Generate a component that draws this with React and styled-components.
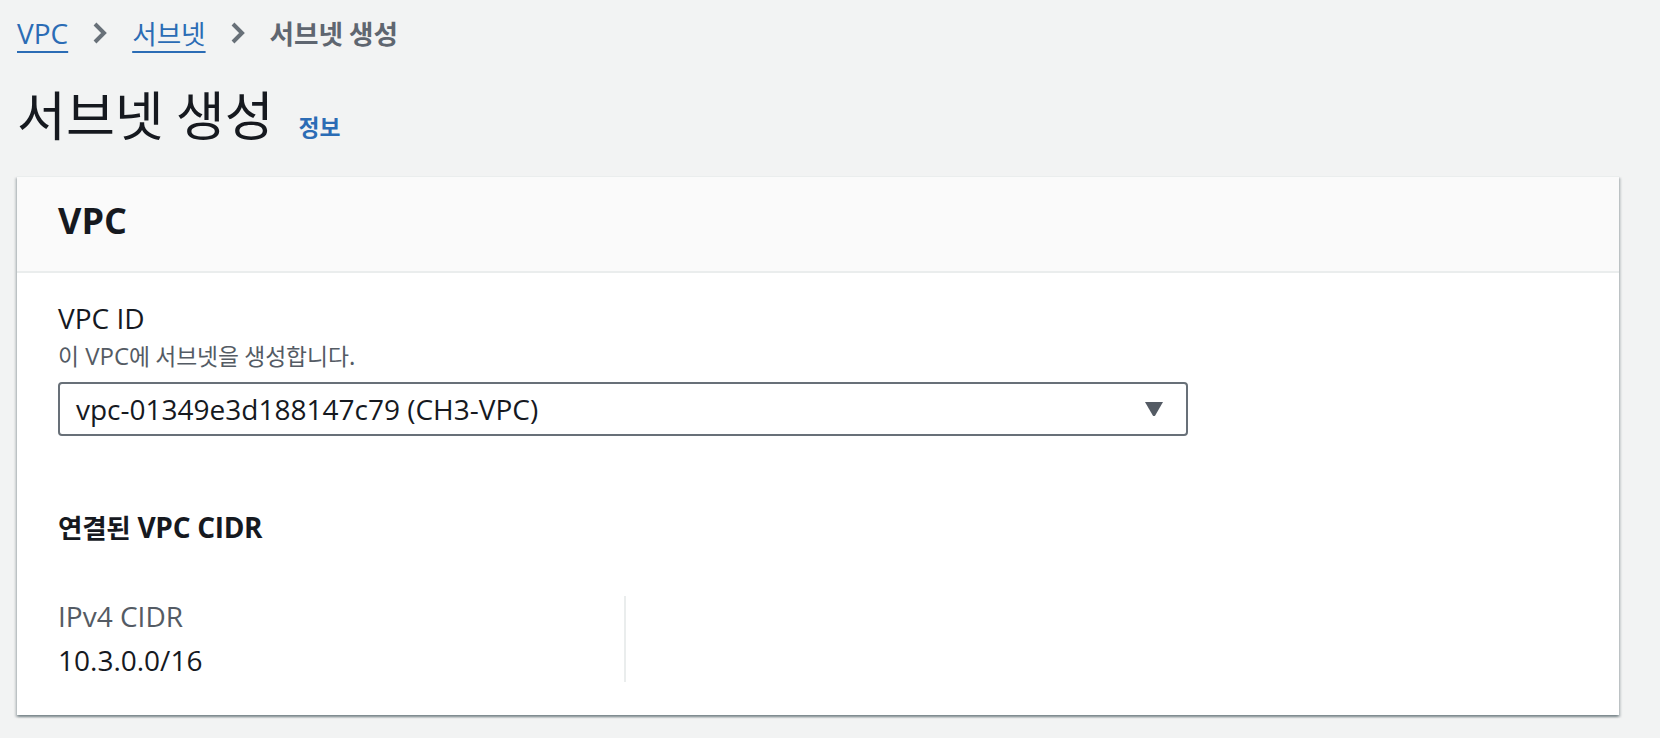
import styled, { createGlobalStyle } from 'styled-components';

const GlobalStyle = createGlobalStyle`
  body {
    margin: 0;
    background: #f2f3f3;
    color: #16191f;
    font-family: "Open Sans", "Noto Sans CJK KR", sans-serif;
  }
`;

// hangul runs: a touch smaller than the latin face, like the original system font
const Ko = styled.span`
  font-family: "Noto Sans CJK KR", sans-serif;
  font-size: 0.95em;
`;

const Page = styled.div`
  padding: 13px 41px 22px 17px;
`;

const Breadcrumbs = styled.nav`
  display: flex;
  align-items: center;
  gap: 24px;
  height: 40px;
  font-size: 28px;
  line-height: 40px;
`;

const Crumb = styled.a`
  color: #2b6cb5;
  text-decoration: underline;
  text-decoration-thickness: 2px;
  text-underline-offset: 7px;
  cursor: pointer;
`;

const Current = styled.span`
  color: #5f6670;
  font-weight: 700;
`;

const Chevron = () => (
  <svg width="16" height="24" viewBox="0 0 16 24">
    <polyline points="3,3 12,12 3,21" fill="none" stroke="#687078" strokeWidth="4" />
  </svg>
);

const TitleRow = styled.div`
  display: flex;
  align-items: baseline;
  gap: 25px;
  margin-top: 32px;
`;

const Title = styled.h1`
  margin: 0;
  font-size: 56px;
  font-weight: 400;
  line-height: 56px;
`;

const InfoLink = styled.a`
  color: #2b6cb5;
  font-size: 24px;
  font-weight: 700;
  cursor: pointer;
`;

const Card = styled.section`
  margin-top: 33px;
  background: #fff;
  border-top: 1px solid #eaeded;
  box-shadow: 0 2px 2px 0 rgba(0, 28, 36, 0.3), 2px 2px 2px 0 rgba(0, 28, 36, 0.15),
    -2px 2px 2px 0 rgba(0, 28, 36, 0.15);
`;

const CardHeader = styled.div`
  background: #fafafa;
  border-bottom: 2px solid #eaeded;
  padding: 22px 41px 28px;
`;

const CardTitle = styled.h2`
  margin: 0;
  font-size: 36px;
  font-weight: 700;
  line-height: 44px;
`;

const CardBody = styled.div`
  padding: 25px 41px 33px;
`;

const Label = styled.div`
  font-size: 28px;
  line-height: 40px;
  color: ${(p) => (p.$muted ? '#545b64' : '#16191f')};
`;

const Description = styled.div`
  margin-top: 2px;
  font-size: 24px;
  line-height: 32px;
  color: #545b64;
`;

const Select = styled.div`
  margin-top: 10px;
  width: 1130px;
  box-sizing: border-box;
  height: 54px;
  border: 2px solid #687078;
  border-radius: 4px;
  display: flex;
  align-items: center;
  justify-content: space-between;
  padding: 0 22px 0 16px;
  font-size: 28px;
  line-height: 50px;
`;

const Caret = () => (
  <svg width="20" height="16" viewBox="0 0 20 16">
    <path d="M1 1h18l-7.8 13.4a1.4 1.4 0 0 1-2.4 0z" fill="#545b64" />
  </svg>
);

const SectionTitle = styled.h3`
  margin: 71px 0 0;
  font-size: 28px;
  font-weight: 700;
  letter-spacing: -0.3px;
  line-height: 40px;
`;

const Columns = styled.div`
  display: flex;
  margin-top: 49px;
`;

const Column = styled.div`
  width: 566px;
  padding-bottom: 2px;
  border-right: 2px solid #eaeded;
`;

const Value = styled.div`
  margin-top: 4px;
  font-size: 28px;
  line-height: 40px;
`;

export default function App() {
  return (
    <>
      <GlobalStyle />
      <Page>
        <Breadcrumbs>
          <Crumb>VPC</Crumb>
          <Chevron />
          <Crumb><Ko>서브넷</Ko></Crumb>
          <Chevron />
          <Current><Ko>서브넷 생성</Ko></Current>
        </Breadcrumbs>

        <TitleRow>
          <Title><Ko>서브넷 생성</Ko></Title>
          <InfoLink><Ko>정보</Ko></InfoLink>
        </TitleRow>

        <Card>
          <CardHeader>
            <CardTitle>VPC</CardTitle>
          </CardHeader>
          <CardBody>
            <Label>VPC ID</Label>
            <Description>
              <Ko>이</Ko> VPC<Ko>에 서브넷을 생성합니다.</Ko>
            </Description>
            <Select>
              <span>vpc-01349e3d188147c79 (CH3-VPC)</span>
              <Caret />
            </Select>

            <SectionTitle>
              <Ko>연결된</Ko> VPC CIDR
            </SectionTitle>
            <Columns>
              <Column>
                <Label $muted>IPv4 CIDR</Label>
                <Value>10.3.0.0/16</Value>
              </Column>
            </Columns>
          </CardBody>
        </Card>
      </Page>
    </>
  );
}
